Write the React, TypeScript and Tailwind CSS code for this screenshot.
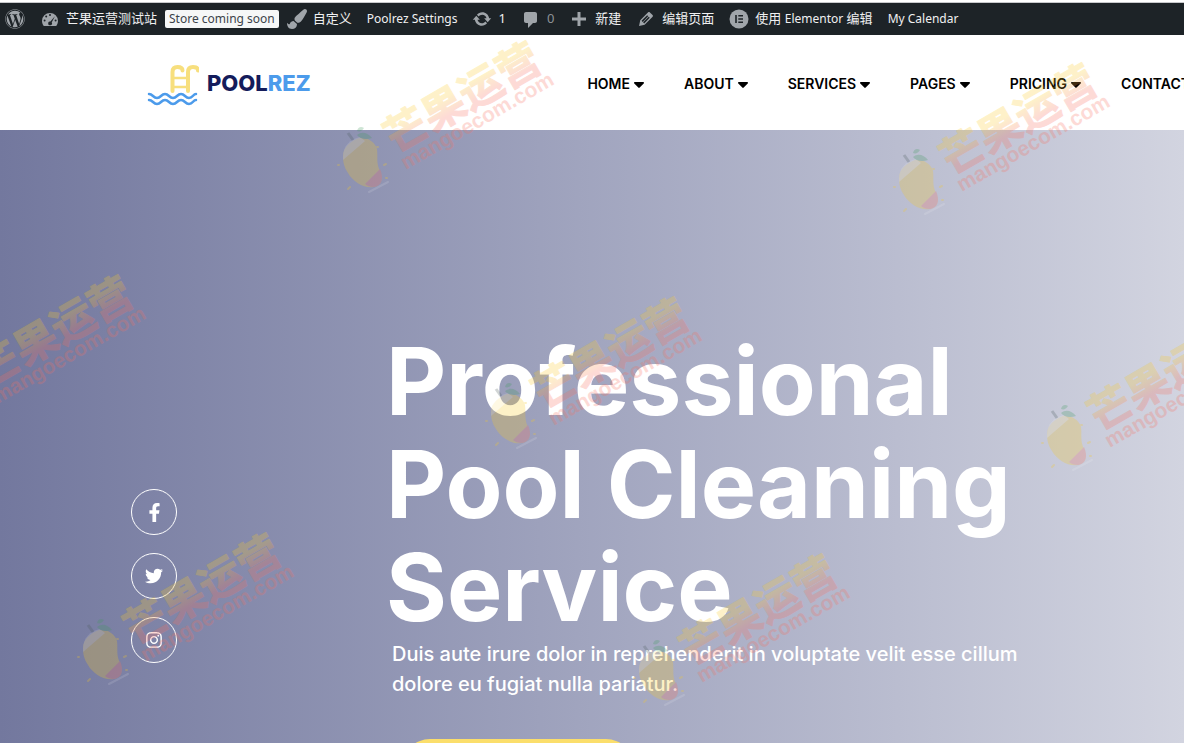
import React from 'react';
import { FaFacebookF, FaInstagram, FaTwitter, FaWordpress, FaPaintBrush } from 'react-icons/fa';

const ADMIN_FONT = "font-['Noto_Sans','Noto_Sans_CJK_SC',sans-serif]";

const watermarks = [
    { left: -78, top: 269 },
    { left: 330, top: 35 },
    { left: 886, top: 57 },
    { left: 478, top: 291 },
    { left: 1034, top: 313 },
    { left: 70, top: 527 },
    { left: 626, top: 548 },
];

const menu = ['HOME', 'ABOUT', 'SERVICES', 'PAGES', 'PRICING', 'CONTACT'];

const socials = [
    { name: 'Facebook', icon: FaFacebookF, size: 19 },
    { name: 'Twitter', icon: FaTwitter, size: 18 },
    { name: 'Instagram', icon: FaInstagram, size: 18 },
];

const GaugeIcon: React.FC = () => (
    <svg viewBox="0 0 20 20" className="h-5 w-5" fill="currentColor">
        <path
            fillRule="evenodd"
            d="M3.8 17h12.4c1-1.3 1.8-3.200 1.800-5a8 8 0 1 0-16 0c0 1.800.800 3.700 1.800 5zM10 5a1 1 0 1 1 0 2 1 1 0 0 1 0-2zM6.200 6.500a1 1 0 1 1 0 2 1 1 0 0 1 0-2zM14.900 7.200l-3.200 6.200a1.900 1.900 0 1 1-1.300-.900zM4.600 10.500a1 1 0 1 1 0 2 1 1 0 0 1 0-2zM15.600 10.500a1 1 0 1 1 0 2 1 1 0 0 1 0-2z"
        />
    </svg>
);

const UpdateIcon: React.FC = () => (
    <svg viewBox="0 0 20 20" className="h-5 w-5" fill="currentColor">
        <path d="M10.200 3.280c3.530 0 6.430 2.610 6.920 6h2.080l-3.500 4-3.500-4h2.320c-.450-1.970-2.210-3.450-4.320-3.450-1.450 0-2.730.710-3.540 1.780L4.950 5.660C6.230 4.200 8.110 3.280 10.200 3.280zm-.400 13.440c-3.520 0-6.430-2.610-6.920-6H.800l3.500-4c1.170 1.330 2.330 2.670 3.500 4H5.480c.450 1.970 2.210 3.450 4.320 3.450 1.450 0 2.730-.710 3.540-1.780l1.710 1.950c-1.280 1.460-3.150 2.380-5.250 2.380z" />
    </svg>
);

const PlusIcon: React.FC = () => (
    <svg viewBox="0 0 20 20" className="h-5 w-5" fill="currentColor">
        <path d="M8.500 3h3v5.500H17v3h-5.500V17h-3v-5.500H3v-3h5.500z" />
    </svg>
);

const CommentIcon: React.FC = () => (
    <svg viewBox="0 0 20 20" className="h-5 w-5" fill="currentColor">
        <path d="M5 3h9c1.100 0 2 .900 2 2v7c0 1.100-.900 2-2 2h-2l-5 5v-5H5c-1.100 0-2-.900-2-2V5c0-1.100.900-2 2-2z" />
    </svg>
);

const PencilIcon: React.FC = () => (
    <svg viewBox="0 0 20 20" className="h-5 w-5" fill="currentColor">
        <path
            fillRule="evenodd"
            d="M13.890 3.390l2.710 2.720c.460.460.420 1.240.030 1.640l-8.010 8.020-5.560 1.160 1.160-5.580 7.950-7.990c.400-.390 1.260-.430 1.720.030zm-2.730 2.790l-5.590 5.610 1.110 1.110 5.540-5.650zm-2.970 8.230l5.580-5.600-1.070-1.080-5.590 5.600z"
        />
    </svg>
);

const ElementorIcon: React.FC = () => (
    <svg viewBox="0 0 20 20" className="h-5 w-5">
        <circle cx="10" cy="10" r="9.500" fill="currentColor" />
        <path d="M6.200 6h1.600v8H6.200zM9.300 6h4.700v1.600H9.300zM9.300 9.200h4.700v1.600H9.300zM9.300 12.400h4.700V14H9.300z" fill="#1d2327" />
    </svg>
);

const CaretIcon: React.FC = () => (
    <svg viewBox="0 0 10 6" className="mt-0.5 h-1.5 w-2.5" fill="currentColor">
        <path d="M1 0h8c.900 0 1.300 1 .700 1.600L5.700 5.600c-.400.400-1 .400-1.400 0L.300 1.600C-.300 1 .100 0 1 0z" />
    </svg>
);

type AdminItemProps = {
    icon?: React.ReactNode;
    children?: React.ReactNode;
    className?: string;
};

const AdminItem: React.FC<AdminItemProps> = ({ icon, children, className = '' }) => (
    <a href="#" className={`flex shrink-0 items-center gap-1.5 whitespace-nowrap ${className}`}>
        {icon && <span className="text-[#a0a5aa]">{icon}</span>}
        {children && <span>{children}</span>}
    </a>
);

const AdminBar: React.FC = () => (
    <div className="shrink-0 bg-[#1d2327]">
        <div className="h-[3px] border-b border-[#c8c9cc] bg-white" />
        <div className={`flex h-8 items-center pl-[5px] text-[13px] text-[#f0f0f1] ${ADMIN_FONT}`}>
            <AdminItem icon={<FaWordpress size={20} />} />
            <AdminItem className="ml-[15px]" icon={<GaugeIcon />}>芒果运营测试站</AdminItem>
            <a href="#" className="ml-2 shrink-0 rounded-[2px] bg-[#f6f7f7] px-1 text-xs leading-[18px] text-[#3c434a]">Store coming soon</a>
            <AdminItem className="ml-2" icon={<FaPaintBrush size={20} />}>自定义</AdminItem>
            <AdminItem className="ml-[15px] text-xs">Poolrez Settings</AdminItem>
            <AdminItem className="ml-[15px]" icon={<UpdateIcon />}>1</AdminItem>
            <AdminItem className="ml-[15px]" icon={<CommentIcon />}><span className="text-[#8c9196]">0</span></AdminItem>
            <AdminItem className="ml-[15px]" icon={<PlusIcon />}>新建</AdminItem>
            <AdminItem className="ml-[15px]" icon={<PencilIcon />}>编辑页面</AdminItem>
            <AdminItem className="ml-[15px]" icon={<ElementorIcon />}>使用 <span className="text-xs">Elementor</span> 编辑</AdminItem>
            <AdminItem className="ml-[15px] text-xs">My Calendar</AdminItem>
        </div>
    </div>
);

const Logo: React.FC = () => (
    <a href="#" className="flex shrink-0 items-center gap-2">
        <svg viewBox="0 0 52 44" className="h-11 w-[52px]" fill="none" strokeLinecap="round">
            <g stroke="#f7df7e" strokeWidth="4">
                <path d="M25.500 29V10q0-5 5-5t5 3.500" />
                <path d="M41 29V10q0-5 5-5t5 3.500" />
                <path d="M26 16h14M26 25h14" strokeWidth="2.500" />
            </g>
            <g stroke="#4c9beb" strokeWidth="2.500">
                <path d="M2 32c4 0 4 4 8 4s4-4 8-4 4 4 8 4 4-4 8-4 4 4 8 4 4-4 7-4" />
                <path d="M2 38c4 0 4 4 8 4s4-4 8-4 4 4 8 4 4-4 8-4 4 4 8 4 4-4 7-4" />
            </g>
        </svg>
        <span className="font-['Inter',sans-serif] text-[22px] font-extrabold text-[#141c5b]">
            POOL<span className="text-[#4c9beb]">REZ</span>
        </span>
    </a>
);

const Header: React.FC = () => (
    <header className="flex h-[95px] shrink-0 items-center justify-between bg-white pl-[147px] pt-0.5">
        <Logo />
        <nav className="-mr-1.5 flex shrink-0 gap-10 font-['Inter',sans-serif] text-sm font-semibold text-black">
            {menu.map((label) => (
                <a key={label} href="#" className="flex items-center gap-1">
                    {label}
                    {label !== 'CONTACT' && <CaretIcon />}
                </a>
            ))}
        </nav>
    </header>
);

const Hero: React.FC = () => (
    <main className="flex grow items-start bg-linear-to-r from-[#73789e] to-[#d2d4e0] pl-[131px] text-white">
        <div className="mt-[359px] flex w-[46px] shrink-0 flex-col gap-[18px]">
            {socials.map(({ name, icon: Icon, size }) => (
                <a key={name} href="#" aria-label={name} className="flex h-[46px] items-center justify-center rounded-full border border-white">
                    <Icon size={size} />
                </a>
            ))}
        </div>
        <div className="ml-[209px] mt-[200px] max-w-[680px]">
            <h1 className="font-['Inter',sans-serif] text-[93px] font-bold leading-[103px]">Professional Pool Cleaning Service</h1>
            <p className="ml-1.5 font-['Inter',sans-serif] text-xl font-medium leading-[30px]">
                Duis aute irure dolor in reprehenderit in voluptate velit esse cillum dolore eu fugiat nulla pariatur.
            </p>
            <button type="button" aria-label="Book a cleaning" className="ml-4 mt-10 h-14 w-[232px] rounded-full bg-[#fbde6b]" />
        </div>
    </main>
);

const Watermark: React.FC<{ id: string; left: number; top: number }> = ({ id, left, top }) => (
    <svg viewBox="0 0 240 170" className="pointer-events-none absolute h-[170px] w-[240px] overflow-visible opacity-25" style={{ left, top }} aria-hidden="true">
        <defs>
            <linearGradient id={id} x1="0" y1="0" x2="0" y2="1">
                <stop offset="0.400" stopColor="#fccb2c" />
                <stop offset="0.700" stopColor="#f8705e" />
            </linearGradient>
        </defs>
        <path d="M13 121c0-9 8-15 16-18 8-1 16 4 18 11 1 8-1 14 3 22 3 8 2 14-6 16-9 2-21-5-26-14-4-6-5-11-5-17z" fill="#f9ca24" />
        <path d="M13 122c0-11 7-18 17-20l5 4-22 19z" fill="#ffffff" opacity="0.500" />
        <path d="M35 149l15-15c4 9 2 17-6 18-4 0-7-1-9-3z" fill="#f8705e" />
        <path d="M27 100c5-4 11-2 15 3-6 2-12 1-15-3zM27 96c1-4 4-5 7-3-2 3-4 4-7 3z" fill="#3f9b5c" />
        <path d="M18 98l5 7" stroke="#4b5b5c" strokeWidth="3" />
        <path d="M8 130h1M18 154l2-2M47 112h1M54 130l2-1M56 143h1" stroke="#f9ca24" strokeWidth="2" strokeLinecap="round" />
        <path d="M39 157l19-10" stroke="#ffffff" strokeWidth="2" strokeLinecap="round" opacity="0.500" />
        <g transform="translate(66 120) rotate(-30)" fontWeight="700">
            <text x="0" y="-1" fontSize="43" fontFamily="'Noto Sans CJK SC', sans-serif" fill={`url(#${id})`} stroke={`url(#${id})`} strokeLinejoin="round">芒果运营</text>
            <text x="1" y="18" fontSize="21" fontFamily="'Liberation Sans', Arial, sans-serif" fill="#f8705e">mangoecom.com</text>
        </g>
    </svg>
);

const App: React.FC = () => {
    return (
        <div className="relative flex h-screen flex-col overflow-hidden bg-white">
            <AdminBar />
            <Header />
            <Hero />
            {watermarks.map((mark, index) => (
                <Watermark key={index} id={`mark-${index}`} left={mark.left} top={mark.top} />
            ))}
        </div>
    );
};

export default App;
